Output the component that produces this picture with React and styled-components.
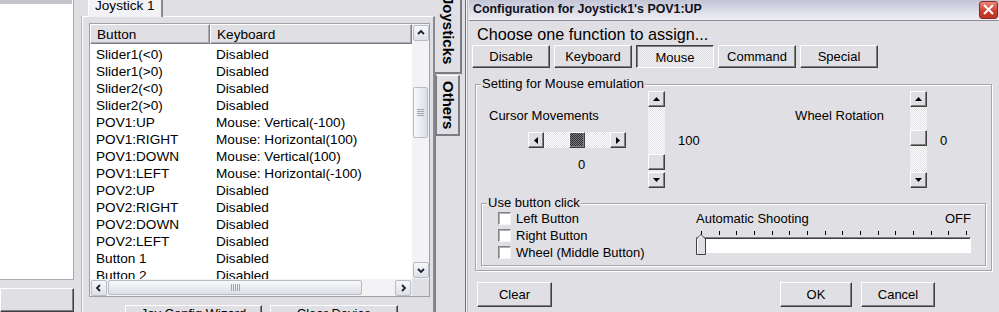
import React from "react";
import styled, { createGlobalStyle, css } from "styled-components";

const FACE = "#e0dfe3";

const GlobalStyle = createGlobalStyle`
  * { box-sizing: border-box; }
  html, body { margin: 0; padding: 0; background: ${FACE}; }
  body {
    font-family: "Liberation Sans", Arial, sans-serif;
    font-size: 13px;
    color: #000;
  }
`;

const dither = (base, dot) => css`
  background-color: ${base};
  background-image: repeating-conic-gradient(${dot} 0 25%, transparent 0 50%);
  background-size: 2px 2px;
`;

const raised = css`
  border: 1px solid;
  border-color: #fff #404040 #404040 #fff;
  box-shadow: inset -1px -1px 0 #808080;
`;

const Screen = styled.div`
  display: flex;
  width: 999px;
  height: 312px;
  overflow: hidden;
  background: ${FACE};
`;

/* ---------- left pane ---------- */
const LeftPane = styled.div`
  width: 74px;
  flex-shrink: 0;
  display: flex;
  flex-direction: column;
`;

const WhiteArea = styled.div`
  height: 298px;
  background: #fff;
  border-right: 1px solid #a8a8b0;
  border-bottom: 1px solid #a8a8b0;
  &::before {
    content: "";
    display: block;
    height: 4px;
    margin-right: 1px;
    background: #c4c4cc;
  }
`;

const Button = styled.button`
  font: inherit;
  color: #000;
  padding: 0;
  flex-shrink: 0;
  white-space: nowrap;
  width: ${(p) => p.$w || 75}px;
  height: ${(p) => p.$h || 23}px;
  display: flex;
  align-items: ${(p) => p.$align || "center"};
  justify-content: center;
  ${raised};
  background: ${FACE};
  ${(p) =>
    p.$pressed &&
    css`
      border-color: #404040 #fff #fff #404040;
      box-shadow: inset 1px 1px 0 #808080;
      ${dither("#f4f4f6", "#dcdce0")};
      padding-top: 2px;
    `}
`;

const LeftButton = styled(Button)`
  margin-top: 8px;
`;

/* ---------- middle (tab page with list) ---------- */
const Middle = styled.div`
  width: 361px;
  flex-shrink: 0;
  padding-left: 8px;
  display: flex;
  flex-direction: column;
  font-size: 13.6px;
`;

const TabStrip = styled.div`
  height: 16px;
  display: flex;
  padding-left: 6px;
`;

const TopTab = styled.div`
  width: 75px;
  height: 17px;
  display: flex;
  align-items: flex-end;
  padding: 0 0 5px 6px;
  line-height: 13px;
  border-left: 1px solid #fff;
  border-right: 2px solid #8a8a90;
  ${dither("#ececf0", "#f8f8fa")};
  position: relative;
  z-index: 1;
`;

const TabPage = styled.div`
  flex: 1;
  border-left: 1px solid #fff;
  border-top: 1px solid #fff;
  border-right: 2px solid #8a8a90;
  box-shadow: -1px 0 0 #b4b4bc;
  padding: 6px 3px 0 6px;
  display: flex;
  flex-direction: column;
`;

const ListView = styled.div`
  width: 341px;
  height: 274px;
  border: 1px solid #a0a0a8;
  background: #fff;
  display: grid;
  grid-template-columns: 1fr 17px;
  grid-template-rows: 1fr 17px;
`;

const ListBody = styled.div`
  overflow: hidden;
`;

const HeaderRow = styled.div`
  display: flex;
  height: 20px;
`;

const HeaderCell = styled.div`
  width: ${(p) => p.$w}px;
  flex: ${(p) => (p.$w ? "none" : 1)};
  display: flex;
  align-items: center;
  padding-left: 6px;
  background: ${FACE};
  border: 1px solid;
  border-color: #fff #808080 #808080 #fff;
  box-shadow: inset -1px -1px 0 #a8a8b0;
`;

const Rows = styled.div`
  padding-top: 2px;
`;

const Row = styled.div`
  display: flex;
  height: 17px;
  align-items: center;
  white-space: nowrap;
`;

const Cell = styled.div`
  width: ${(p) => p.$w}px;
  padding-left: 6px;
`;

/* XP-ish scrollbars for the list */
const XpTrack = styled.div`
  display: flex;
  flex-direction: ${(p) => (p.$h ? "row" : "column")};
  background: #f3f3f6;
  padding: 1px;
`;

const XpButton = styled.div`
  width: 16px;
  height: 16px;
  flex-shrink: 0;
  border: 1px solid #b8bac6;
  border-radius: 2px;
  background: linear-gradient(#f6f7fa, #dfe1e8);
  display: flex;
  align-items: center;
  justify-content: center;
`;

const XpThumb = styled.div`
  flex-shrink: 0;
  ${(p) =>
    p.$h
      ? css`
          width: ${p.$len}px;
          height: 15px;
          margin-left: ${p.$off}px;
        `
      : css`
          height: ${p.$len}px;
          width: 15px;
          margin-top: ${p.$off}px;
        `}
  border: 1px solid #b8bac6;
  border-radius: 2px;
  background: ${(p) =>
    p.$h ? "linear-gradient(#f8f9fb, #dcdee6)" : "linear-gradient(90deg, #f8f9fb, #dcdee6)"};
  display: flex;
  align-items: center;
  justify-content: center;
`;

const Spacer = styled.div`
  flex: 1;
`;

const Corner = styled.div`
  background: ${FACE};
`;

const Chevron = ({ dir }) => {
  const d = {
    up: "M3 7 L6 4 L9 7",
    down: "M3 5 L6 8 L9 5",
    left: "M7 3 L4 6 L7 9",
    right: "M5 3 L8 6 L5 9",
  }[dir];
  return (
    <svg width="12" height="12" viewBox="0 0 12 12">
      <path d={d} fill="none" stroke="#1e2030" strokeWidth="1.8" />
    </svg>
  );
};

const Grip = ({ h }) =>
  h ? (
    <svg width="9" height="7" viewBox="0 0 9 7">
      {[0, 2, 4, 6, 8].map((x) => (
        <rect key={x} x={x} y="0" width="1" height="7" fill="#a0a4b4" />
      ))}
    </svg>
  ) : (
    <svg width="7" height="7" viewBox="0 0 7 7">
      {[0, 2, 4, 6].map((y) => (
        <rect key={y} x="0" y={y} width="7" height="1" fill="#a0a4b4" />
      ))}
    </svg>
  );

const BottomButtons = styled.div`
  display: flex;
  gap: 8px;
  margin-top: 8px;
  padding-left: 36px;
  font-size: 13px;
`;

/* ---------- vertical tabs ---------- */
const SideTabs = styled.div`
  width: 30px;
  flex-shrink: 0;
  border-left: 1px solid #7c7c84;
  display: flex;
  flex-direction: column;
  align-items: flex-start;
`;

const SideTab = styled.div`
  writing-mode: vertical-rl;
  font-weight: bold;
  font-size: 15px;
  line-height: 16px;
  white-space: nowrap;
  display: flex;
  align-items: center;
  justify-content: flex-end;
  width: ${(p) => (p.$active ? 27 : 24)}px;
  height: ${(p) => p.$len}px;
  padding-bottom: ${(p) => (p.$active ? 8 : 5)}px;
  margin-left: ${(p) => (p.$active ? -1 : 0)}px;
  background: ${FACE};
  border-right: 2px solid #7c7c84;
  border-bottom: 2px solid #7c7c84;
  border-top: ${(p) => (p.$active ? "none" : "1px solid #fff")};
  ${(p) => !p.$active && "margin-top: 1px; border-left: 1px solid #7c7c84;"}
`;

/* ---------- dialog ---------- */
const Dialog = styled.div`
  flex: 1;
  border-left: 1px solid #6c6c74;
  box-shadow: inset 1px 0 0 #f4f4f6, inset 2px 0 0 #b8b8c0;
  padding-left: 3px;
  display: flex;
  flex-direction: column;
`;

const TitleBar = styled.div`
  height: 21px;
  display: flex;
  align-items: center;
  justify-content: space-between;
  padding: 0 3px 2px 4px;
  background: linear-gradient(#c3c4d6, #e6e7ef 80%, #f0f0f4);
  border-bottom: 1px solid #8c8c98;
  font-weight: bold;
  font-size: 12.4px;
  color: #10101c;
`;

const CloseBox = styled.div`
  width: 19px;
  height: 18px;
  margin-top: 1px;
  border-radius: 3px;
  border: 1px solid #8c2a20;
  background: linear-gradient(#e8867a, #cc3c2e 60%, #b83424);
  display: flex;
  align-items: center;
  justify-content: center;
`;

const DialogBody = styled.div`
  flex: 1;
  padding: 0 9px 0 3px;
  display: flex;
  flex-direction: column;
`;

const Heading = styled.div`
  font-size: 16.2px;
  line-height: 20px;
  margin: 3px 0 1px 5px;
  white-space: nowrap;
`;

const ChoiceRow = styled.div`
  display: flex;
  gap: 4px;
`;

const Frame = styled.div`
  position: relative;
  border: 1px solid #a4a4ac;
  box-shadow: 1px 1px 0 #fff, inset 1px 1px 0 #fff;
  margin: ${(p) => p.$m};
  padding: ${(p) => p.$p};
`;

const Legend = styled.span`
  position: absolute;
  top: -8px;
  left: 5px;
  padding: 0 1px;
  line-height: 14px;
  background: ${FACE};
`;

const MouseRow = styled.div`
  display: flex;
  height: 97px;
`;

const CursorCol = styled.div`
  width: 172px;
  display: flex;
  flex-direction: column;
  padding: 18px 0 0 13px;
`;

const CursorScrollWrap = styled.div`
  margin: 9px 0 0 39px;
`;

const ValueLabel = styled.div`
  width: ${(p) => p.$w}px;
  padding: ${(p) => p.$p};
  text-align: ${(p) => p.$align || "left"};
  white-space: nowrap;
`;

/* classic scrollbars in the dialog */
const ClassicScroll = styled.div`
  display: flex;
  flex-direction: ${(p) => (p.$h ? "row" : "column")};
  width: ${(p) => (p.$h ? `${p.$len}px` : "17px")};
  height: ${(p) => (p.$h ? "16px" : `${p.$len}px`)};
  ${dither("#fff", "#e0dfe3")};
  margin-top: ${(p) => (p.$h ? 0 : 1)}px;
`;

const ClassicBtn = styled.div`
  width: ${(p) => (p.$h ? 16 : 17)}px;
  height: 16px;
  flex-shrink: 0;
  background: ${FACE};
  ${raised};
  display: flex;
  align-items: center;
  justify-content: center;
  ${(p) => p.$off !== undefined && (p.$h ? `margin-left:${p.$off}px;` : `margin-top:${p.$off}px;`)}
  ${(p) => p.$dark && dither("#7a7a80", "#303034")}
`;

const Tri = ({ dir }) => {
  const pts = {
    up: "0,4 3.5,0 7,4",
    down: "0,0 3.5,4 7,0",
    left: "4,0 0,3.5 4,7",
    right: "0,0 4,3.5 0,7",
  }[dir];
  const vert = dir === "up" || dir === "down";
  return (
    <svg width={vert ? 7 : 4} height={vert ? 4 : 7} viewBox={vert ? "0 0 7 4" : "0 0 4 7"}>
      <polygon points={pts} fill="#000" />
    </svg>
  );
};

const ClickRow = styled.div`
  display: flex;
`;

const CheckCol = styled.div`
  width: 214px;
  padding: 0 0 0 16px;
  display: flex;
  flex-direction: column;
`;

const CheckLine = styled.label`
  display: flex;
  align-items: center;
  height: 17px;
  gap: 5px;
  white-space: nowrap;
`;

const CheckBox = styled.span`
  width: 13px;
  height: 13px;
  flex-shrink: 0;
  background: #fff;
  border: 1px solid;
  border-color: #808080 #f4f4f6 #f4f4f6 #808080;
  box-shadow: inset 1px 1px 0 #b0b0b8;
`;

const ShootCol = styled.div`
  width: 275px;
  padding-top: 1px;
`;

const ShootHead = styled.div`
  display: flex;
  justify-content: space-between;
  line-height: 15px;
`;

const Ticks = styled.div`
  display: flex;
  justify-content: space-between;
  padding: 5px 4px 0 5px;
  height: 10px;
`;

const Tick = styled.span`
  width: 1px;
  height: 4px;
  background: #000;
`;

const Track = styled.div`
  position: relative;
  height: 16px;
  background: #fff;
  border: 1px solid;
  border-color: #808080 #fff #fff #808080;
  box-shadow: inset 1px 1px 0 #404040;
  margin-top: 1px;
`;

const Thumb = styled.svg`
  position: absolute;
  left: -1px;
  top: -4px;
`;

const FooterRow = styled.div`
  display: flex;
  margin-top: 11px;
  padding: 0 57px 0 5px;
  gap: 9px;
`;

const rows = [
  ["Slider1(<0)", "Disabled"],
  ["Slider1(>0)", "Disabled"],
  ["Slider2(<0)", "Disabled"],
  ["Slider2(>0)", "Disabled"],
  ["POV1:UP", "Mouse: Vertical(-100)"],
  ["POV1:RIGHT", "Mouse: Horizontal(100)"],
  ["POV1:DOWN", "Mouse: Vertical(100)"],
  ["POV1:LEFT", "Mouse: Horizontal(-100)"],
  ["POV2:UP", "Disabled"],
  ["POV2:RIGHT", "Disabled"],
  ["POV2:DOWN", "Disabled"],
  ["POV2:LEFT", "Disabled"],
  ["Button 1", "Disabled"],
  ["Button 2", "Disabled"],
];

const choices = ["Disable", "Keyboard", "Mouse", "Command", "Special"];

const VScroll = ({ len, thumb }) => (
  <ClassicScroll $len={len}>
    <ClassicBtn>
      <Tri dir="up" />
    </ClassicBtn>
    <ClassicBtn $off={thumb} />
    <Spacer />
    <ClassicBtn>
      <Tri dir="down" />
    </ClassicBtn>
  </ClassicScroll>
);

export default function App() {
  return (
    <>
      <GlobalStyle />
      <Screen>
        <LeftPane>
          <WhiteArea />
          <LeftButton $w={74} $h={24} />
        </LeftPane>

        <Middle>
          <TabStrip>
            <TopTab>Joystick 1</TopTab>
          </TabStrip>
          <TabPage>
            <ListView>
              <ListBody>
                <HeaderRow>
                  <HeaderCell $w={120}>Button</HeaderCell>
                  <HeaderCell>Keyboard</HeaderCell>
                </HeaderRow>
                <Rows>
                  {rows.map(([name, key]) => (
                    <Row key={name}>
                      <Cell $w={120}>{name}</Cell>
                      <Cell>{key}</Cell>
                    </Row>
                  ))}
                </Rows>
              </ListBody>
              <XpTrack>
                <XpButton>
                  <Chevron dir="up" />
                </XpButton>
                <XpThumb $len={51} $off={46}>
                  <Grip />
                </XpThumb>
                <Spacer />
                <XpButton>
                  <Chevron dir="down" />
                </XpButton>
              </XpTrack>
              <XpTrack $h>
                <XpButton>
                  <Chevron dir="left" />
                </XpButton>
                <XpThumb $h $len={254} $off={1}>
                  <Grip h />
                </XpThumb>
                <Spacer />
                <XpButton>
                  <Chevron dir="right" />
                </XpButton>
              </XpTrack>
              <Corner />
            </ListView>
            <BottomButtons>
              <Button $w={137} $h={24} $align="flex-start">Joy Config Wizard</Button>
              <Button $w={128} $h={24} $align="flex-start">Clear Device</Button>
            </BottomButtons>
          </TabPage>
        </Middle>

        <SideTabs>
          <SideTab $active $len={74}>Joysticks</SideTab>
          <SideTab $len={61}>Others</SideTab>
        </SideTabs>

        <Dialog>
          <TitleBar>
            <span>Configuration for Joystick1's POV1:UP</span>
            <CloseBox>
              <svg width="11" height="11" viewBox="0 0 11 11">
                <path d="M1 1 L10 10 M10 1 L1 10" stroke="#fff" strokeWidth="2" />
              </svg>
            </CloseBox>
          </TitleBar>
          <DialogBody>
            <Heading>Choose one function to assign...</Heading>
            <ChoiceRow>
              {choices.map((c) => (
                <Button key={c} $w={78} $h={23} $pressed={c === "Mouse"}>
                  {c}
                </Button>
              ))}
            </ChoiceRow>

            <Frame $m="16px 0 0 3px" $p="5px 5px 4px 0">
              <Legend>Setting for Mouse emulation</Legend>
              <MouseRow>
                <CursorCol>
                  <span>Cursor Movements</span>
                  <CursorScrollWrap>
                    <ClassicScroll $h $len={98}>
                      <ClassicBtn $h>
                        <Tri dir="left" />
                      </ClassicBtn>
                      <ClassicBtn $h $off={25} $dark />
                      <Spacer />
                      <ClassicBtn $h>
                        <Tri dir="right" />
                      </ClassicBtn>
                    </ClassicScroll>
                  </CursorScrollWrap>
                  <ValueLabel $w={140} $p="9px 0 0 89px">0</ValueLabel>
                </CursorCol>
                <VScroll len={97} thumb={47} />
                <ValueLabel $w={120} $p="43px 0 0 13px">100</ValueLabel>
                <ValueLabel $w={125} $p="18px 26px 0 0" $align="right">
                  Wheel Rotation
                </ValueLabel>
                <VScroll len={97} thumb={23} />
                <ValueLabel $w={30} $p="43px 0 0 13px">0</ValueLabel>
              </MouseRow>

              <Frame $m="16px 0 0 5px" $p="6px 14px 4px 0">
                <Legend>Use button click</Legend>
                <ClickRow>
                  <CheckCol>
                    <CheckLine>
                      <CheckBox />
                      Left Button
                    </CheckLine>
                    <CheckLine>
                      <CheckBox />
                      Right Button
                    </CheckLine>
                    <CheckLine>
                      <CheckBox />
                      Wheel (Middle Button)
                    </CheckLine>
                  </CheckCol>
                  <ShootCol>
                    <ShootHead>
                      <span>Automatic Shooting</span>
                      <span>OFF</span>
                    </ShootHead>
                    <Ticks>
                      {Array.from({ length: 16 }, (_, i) => (
                        <Tick key={i} />
                      ))}
                    </Ticks>
                    <Track>
                      <Thumb width="10" height="21" viewBox="0 0 10 21">
                        <path d="M0.5 20.5 V5 L5 0.5 L9.5 5 V20.5 Z" fill={FACE} stroke="#404040" />
                        <path d="M1.5 19.5 V5.3 L5 1.8" fill="none" stroke="#fff" />
                      </Thumb>
                    </Track>
                  </ShootCol>
                </ClickRow>
              </Frame>
            </Frame>

            <FooterRow>
              <Button $w={75} $h={25}>Clear</Button>
              <Spacer />
              <Button $w={72} $h={25}>OK</Button>
              <Button $w={74} $h={25}>Cancel</Button>
            </FooterRow>
          </DialogBody>
        </Dialog>
      </Screen>
    </>
  );
}
